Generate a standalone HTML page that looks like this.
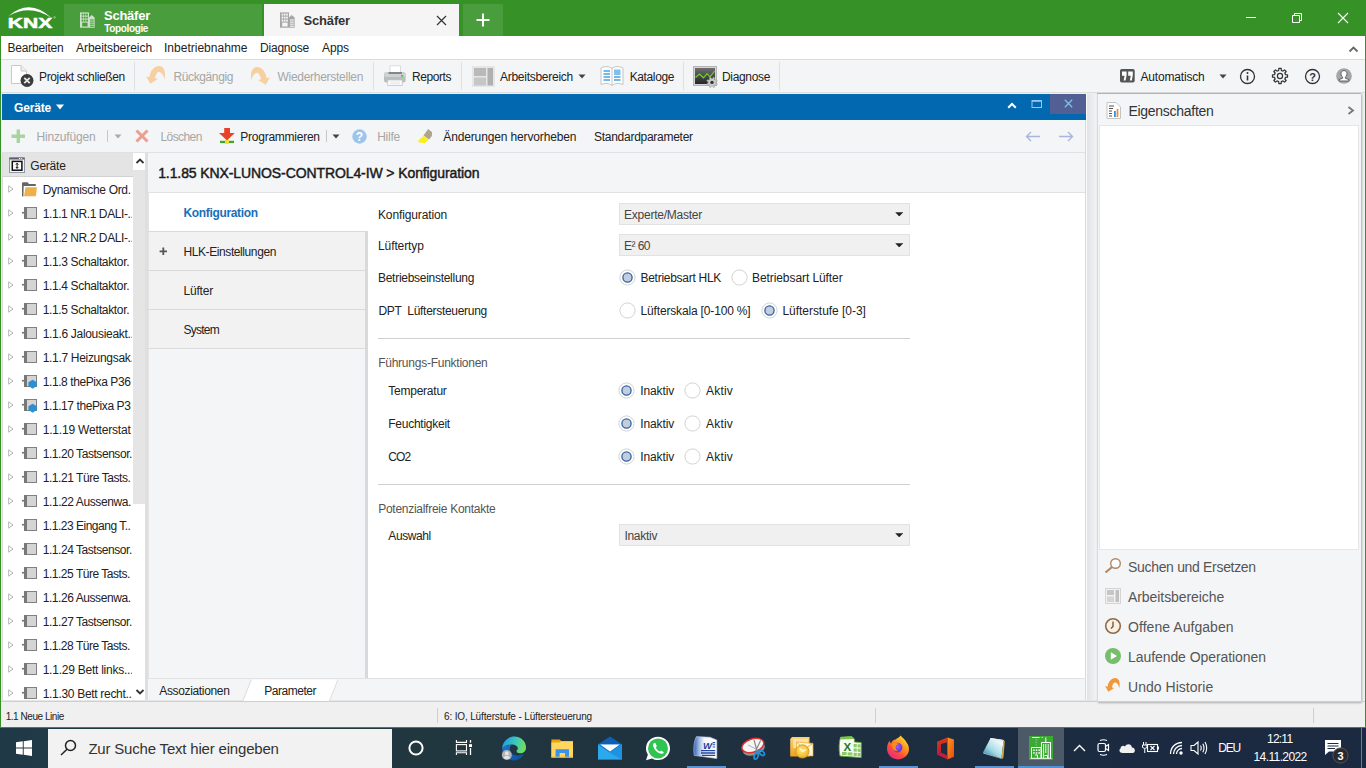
<!DOCTYPE html>
<html lang="de">
<head>
<meta charset="utf-8">
<title>ETS5 - Schäfer</title>
<style>
html,body{margin:0;padding:0}
body{width:1366px;height:768px;overflow:hidden;position:relative;background:#f0f0f0;font-family:"Liberation Sans", sans-serif;}
#app div,#app svg,#app span{position:absolute}
#app span{white-space:pre;line-height:1;display:block}
#app{position:absolute;left:0;top:0;width:1366px;height:768px;overflow:hidden}
</style>
</head>
<body>
<div id="app">
<div style="left:0px;top:0px;width:1366px;height:728px;background:#369127;"></div>
<div style="left:1px;top:36px;width:1364px;height:23px;background:#fff;"></div>
<div style="left:1px;top:59px;width:1364px;height:1px;background:#dcdcdc;"></div>
<div style="left:1px;top:60px;width:1364px;height:33px;background:#f4f5f7;"></div>
<div style="left:1px;top:92px;width:1364px;height:1px;background:#dcdcdc;"></div>
<div style="left:1px;top:93px;width:1364px;height:609px;background:#eef0f3;"></div>
<div style="left:1px;top:702px;width:1364px;height:25px;background:#f0f0f0;"></div>
<div style="left:1px;top:701px;width:1364px;height:1px;background:#d4d4d4;"></div>
<div style="left:64px;top:4px;width:198px;height:32px;background:#4a9d3d;"></div>
<div style="left:264px;top:4px;width:195px;height:32px;background:#f5f5f5;"></div>
<div style="left:463px;top:4px;width:40px;height:32px;background:#4a9d3d;"></div>
<div style="left:134px;top:62px;width:1px;height:28px;background:#dedfe2;"></div>
<div style="left:373px;top:62px;width:1px;height:28px;background:#dedfe2;"></div>
<div style="left:461px;top:62px;width:1px;height:28px;background:#dedfe2;"></div>
<div style="left:683px;top:62px;width:1px;height:28px;background:#dedfe2;"></div>
<div style="left:779px;top:62px;width:1px;height:28px;background:#dedfe2;"></div>
<div style="left:2px;top:94px;width:1084px;height:26px;background:#0269b1;"></div>
<div style="left:1050px;top:94px;width:36px;height:20px;background:#525f95;"></div>
<div style="left:2px;top:120px;width:1084px;height:32px;background:#f4f5f7;"></div>
<div style="left:2px;top:152px;width:1084px;height:1px;background:#dfe1e5;"></div>
<div style="left:107px;top:130px;width:1px;height:12px;background:#c8c8c8;"></div>
<div style="left:326px;top:130px;width:1px;height:12px;background:#c8c8c8;"></div>
<div style="left:2px;top:153px;width:131px;height:547px;background:#fff;"></div>
<div style="left:2px;top:153px;width:131px;height:24px;background:#e4e4e4;"></div>
<div style="left:2px;top:176px;width:131px;height:1px;background:#d2d2d2;"></div>
<div style="left:132.5px;top:153px;width:12.5px;height:547px;background:#fff;"></div>
<div style="left:132.5px;top:170px;width:12.5px;height:334px;background:#e5e5e5;"></div>
<div style="left:145px;top:153px;width:3px;height:547px;background:#dfdfdf;"></div>
<div style="left:2px;top:153px;width:1px;height:548px;background:#dadada;"></div>
<div style="left:2px;top:700px;width:146px;height:1px;background:#d2d2d2;"></div>
<div style="left:148px;top:153px;width:938px;height:525px;background:#fff;"></div>
<div style="left:148px;top:153px;width:938px;height:39px;background:#f4f5f7;"></div>
<div style="left:148px;top:192px;width:938px;height:1px;background:#dfe1e5;"></div>
<div style="left:148px;top:231px;width:218px;height:447px;background:#f4f5f7;"></div>
<div style="left:148px;top:231px;width:218px;height:117px;background:#f2f2f2;"></div>
<div style="left:148px;top:193px;width:1px;height:485px;background:#e4e4e4;"></div>
<div style="left:148px;top:231px;width:218px;height:1px;background:#dadada;"></div>
<div style="left:148px;top:270px;width:218px;height:1px;background:#dadada;"></div>
<div style="left:148px;top:309px;width:218px;height:1px;background:#dadada;"></div>
<div style="left:148px;top:348px;width:218px;height:1px;background:#dadada;"></div>
<div style="left:365px;top:231px;width:3px;height:447px;background:#d7d9dc;"></div>
<div style="left:148px;top:678px;width:938px;height:24px;background:#f4f5f7;"></div>
<div style="left:1085px;top:120px;width:1px;height:582px;background:#d9d9d9;"></div>
<div style="left:1086px;top:94px;width:1px;height:608px;background:#fafafa;"></div>
<div style="left:148px;top:678px;width:938px;height:1px;background:#e2e2e2;"></div>
<div style="left:619px;top:203px;width:291px;height:22px;background:#f0f0f0;box-sizing:border-box;border:1px solid #e2e2e2;"></div>
<div style="left:619px;top:234px;width:291px;height:22px;background:#f0f0f0;box-sizing:border-box;border:1px solid #e2e2e2;"></div>
<div style="left:619px;top:524px;width:291px;height:22px;background:#f0f0f0;box-sizing:border-box;border:1px solid #e2e2e2;"></div>
<div style="left:378px;top:338px;width:532px;height:1px;background:#d0d0d0;"></div>
<div style="left:378px;top:484px;width:532px;height:1px;background:#d0d0d0;"></div>
<div style="left:1087px;top:94px;width:10px;height:608px;background:#eaebee;background:linear-gradient(90deg,#e2e3e6,#f3f4f6);"></div>
<div style="left:1097px;top:93px;width:264px;height:609px;background:#f4f5f7;box-shadow:1px 1px 2px rgba(0,0,0,.28);"></div>
<div style="left:1097px;top:94px;width:1px;height:607px;background:#d9d9d9;"></div>
<div style="left:1099px;top:125px;width:260px;height:425px;background:#fff;box-sizing:border-box;border:1px solid #e6e6e6;"></div>
<div style="left:1097px;top:93px;width:264px;height:1px;background:#b4b4b4;"></div>
<div style="left:1px;top:701px;width:1364px;height:1px;background:#cfcfcf;"></div>
<div style="left:1px;top:700px;width:1096px;height:1px;background:#e6e6e6;"></div>
<div style="left:437px;top:708px;width:1px;height:15px;background:#cfcfcf;"></div>
<div style="left:875px;top:708px;width:1px;height:15px;background:#cfcfcf;"></div>
<div style="left:1313px;top:708px;width:1px;height:15px;background:#cfcfcf;"></div>
<div style="left:0px;top:728px;width:1366px;height:40px;background:#1e2f41;background:linear-gradient(90deg,#1f3a47 0,#21373f 32%,#1e2f40 60%,#1b2a41 85%,#1b2941 100%);"></div>
<div style="left:48px;top:729px;width:344px;height:39px;background:#f2f2f2;"></div>
<div style="left:1361px;top:728px;width:1px;height:40px;background:#6f7a88;"></div>
<div style="left:1018px;top:728px;width:46px;height:40px;background:#4c5967;"></div>
<div style="left:687px;top:766px;width:39px;height:2px;background:#5d93d0;"></div>
<div style="left:879px;top:766px;width:39px;height:2px;background:#5d93d0;"></div>
<div style="left:975px;top:766px;width:39px;height:2px;background:#5d93d0;"></div>
<div style="left:1018px;top:766px;width:46px;height:2px;background:#4f92d6;"></div>
<svg style="left:7px;top:6px;" width="50" height="24" viewBox="0 0 50 24"><path d="M1.6 10 Q23 -8.6 44.8 12.2 Q23 -2.6 1.6 10 Z" fill="#fff"/>
<text x="0.8" y="21.9" font-family="Liberation Sans, sans-serif" font-weight="bold" font-size="14.4" fill="#fff" stroke="#fff" stroke-width=".5" textLength="44.4" lengthAdjust="spacingAndGlyphs">KNX</text><circle cx="47.6" cy="11.4" r=".8" fill="none" stroke="#fff" stroke-width=".4"/></svg>
<svg style="left:80px;top:12px;" width="16" height="17" viewBox="0 0 16 17"><g opacity="0.72"><rect x="0" y="0.4" width="9" height="15.3" fill="#fff"/><path d="M9 5.6 L11.7 3 L14.6 5.6 V15.7 H9 Z" fill="#fff"/>
<g fill="#4a9d3d"><rect x="1.6" y="1.6" width="1.7" height="2" /><rect x="3.9" y="1.6" width="1.7" height="2" /><rect x="6.2" y="1.6" width="1.7" height="2" /><rect x="1.6" y="4.6" width="1.7" height="2" /><rect x="3.9" y="4.6" width="1.7" height="2" /><rect x="6.2" y="4.6" width="1.7" height="2" /><rect x="1.6" y="7.6" width="1.7" height="2" /><rect x="3.9" y="7.6" width="1.7" height="2" /><rect x="6.2" y="7.6" width="1.7" height="2" /><rect x="2.2" y="10.6" width="5.4" height="3.9"/><rect x="10" y="7.4" width="3.8" height="1.1"/><rect x="10" y="9.5" width="3.8" height="1.1"/><rect x="10" y="11.6" width="3.8" height="1.1"/><rect x="10" y="13.7" width="3.8" height="1.1"/></g></g></svg>
<svg style="left:280px;top:12px;" width="16" height="17" viewBox="0 0 16 17"><g opacity="0.75"><rect x="0" y="0.4" width="9" height="15.3" fill="#8c8c8c"/><path d="M9 5.6 L11.7 3 L14.6 5.6 V15.7 H9 Z" fill="#8c8c8c"/>
<g fill="#f4f5f7"><rect x="1.6" y="1.6" width="1.7" height="2" /><rect x="3.9" y="1.6" width="1.7" height="2" /><rect x="6.2" y="1.6" width="1.7" height="2" /><rect x="1.6" y="4.6" width="1.7" height="2" /><rect x="3.9" y="4.6" width="1.7" height="2" /><rect x="6.2" y="4.6" width="1.7" height="2" /><rect x="1.6" y="7.6" width="1.7" height="2" /><rect x="3.9" y="7.6" width="1.7" height="2" /><rect x="6.2" y="7.6" width="1.7" height="2" /><rect x="2.2" y="10.6" width="5.4" height="3.9"/><rect x="10" y="7.4" width="3.8" height="1.1"/><rect x="10" y="9.5" width="3.8" height="1.1"/><rect x="10" y="11.6" width="3.8" height="1.1"/><rect x="10" y="13.7" width="3.8" height="1.1"/></g></g></svg>
<svg style="left:436px;top:15px;" width="11" height="11" viewBox="0 0 11 11"><path d="M1 1 L10 10 M10 1 L1 10" stroke="#333" stroke-width="1.2" fill="none"/></svg>
<svg style="left:476px;top:13px;" width="14" height="14" viewBox="0 0 14 14"><path d="M7 0.5 V13.5 M0.5 7 H13.5" stroke="#fff" stroke-width="2" fill="none"/></svg>
<svg style="left:1245px;top:12px;" width="12" height="12" viewBox="0 0 12 12"><path d="M1 5.5 H11" stroke="#fff" stroke-width="1"/></svg>
<svg style="left:1291px;top:12px;" width="12" height="12" viewBox="0 0 12 12"><path d="M1.5 3.5 H8.5 V10.5 H1.5 Z M3.5 3.5 V1.5 H10.5 V8.5 H8.5" stroke="#fff" stroke-width="1" fill="none"/></svg>
<svg style="left:1337px;top:12px;" width="12" height="12" viewBox="0 0 12 12"><path d="M1 1 L11 11 M11 1 L1 11" stroke="#fff" stroke-width="1.1" fill="none"/></svg>
<svg style="left:1348px;top:45px;" width="11" height="8" viewBox="0 0 11 8"><path d="M1.5 6.5 L5.5 2.5 L9.5 6.5" stroke="#666" stroke-width="1.8" fill="none"/></svg>
<svg style="left:10px;top:64px;" width="26" height="24" viewBox="0 0 26 24"><path d="M1.5 1.5 H11 L16.5 7 V19.5 H1.5 Z" fill="#fff" stroke="#c8c8c8"/><path d="M11 1.5 V7 H16.5" fill="#eee" stroke="#c8c8c8"/>
<circle cx="17" cy="16.5" r="6.5" fill="#3c3c3c"/><path d="M14.3 13.8 L19.7 19.2 M19.7 13.8 L14.3 19.2" stroke="#e8e8e8" stroke-width="1.8"/></svg>
<svg style="left:146px;top:66px;" width="20" height="18" viewBox="0 0 20 18"><path d="M0.15 10.4 L3.4 11.1 C4 5 8.5 0.1 13 0.1 C17.8 0.1 20.2 5.5 18.4 13.3 C17.8 9.5 16 6.6 13.6 5.9 C11.5 5.4 9.8 7.6 9 12.3 L11.9 13 L4.25 17.8 Z" fill="#f6d0a0"/></svg>
<svg style="left:249.5px;top:66.5px;" width="20" height="18" viewBox="0 0 20 18"><g transform="translate(20,0) scale(-1,1)"><path d="M0.15 10.4 L3.4 11.1 C4 5 8.5 0.1 13 0.1 C17.8 0.1 20.2 5.5 18.4 13.3 C17.8 9.5 16 6.6 13.6 5.9 C11.5 5.4 9.8 7.6 9 12.3 L11.9 13 L4.25 17.8 Z" fill="#f6d0a0"/></g></svg>
<svg style="left:383px;top:65px;" width="24" height="22" viewBox="0 0 24 22"><rect x="7" y="0.8" width="10.5" height="8" fill="#fff" stroke="#d4d4d4" stroke-width=".8"/><rect x="1" y="7" width="21.6" height="10.5" rx="2.5" fill="#b9bdbf"/><rect x="1" y="7" width="21.6" height="5" rx="2.5" fill="#cfd2d3"/><rect x="5.5" y="7.4" width="13.5" height="1.2" fill="#555"/>
<rect x="4.8" y="15" width="14.4" height="5.6" fill="#fff" stroke="#c4c4c4" stroke-width=".8"/><path d="M7 17 H17 M7 18.8 H17" stroke="#ddd" stroke-width=".8"/><rect x="18" y="10" width="2.2" height="1.8" fill="#4c4"/></svg>
<svg style="left:472px;top:66px;" width="23" height="21" viewBox="0 0 23 21"><rect x="0" y="0" width="23" height="21" fill="#e6e6e6"/><rect x="2" y="2" width="12" height="8" fill="#b9b9b9"/><rect x="2" y="11.5" width="12" height="8" fill="#c6c6c6"/><rect x="15.5" y="2" width="5.5" height="17.5" fill="#b0b0b0"/></svg>
<svg style="left:578px;top:74px;" width="8" height="5" viewBox="0 0 8 5"><path d="M0.5 0.5 H7.5 L4 4.5 Z" fill="#444"/></svg>
<svg style="left:600px;top:65px;" width="24" height="22" viewBox="0 0 24 22"><path d="M1 3 C5 1 9 1 12 3.5 C15 1 19 1 23 3 V19.5 C19 18 15 18 12 20.5 C9 18 5 18 1 19.5 Z" fill="#fdfdfd" stroke="#c4c4c4"/>
<path d="M12 3.5 V20.5" stroke="#c8c8c8"/><g stroke="#4aa3df" stroke-width="1.3"><path d="M3.5 6 H10 M3.5 9 H10 M3.5 12 H10 M3.5 15 H10 M14 12 H20.5 M14 15 H20.5"/></g><rect x="14" y="4.5" width="6.5" height="5.5" fill="#7fc0ec"/></svg>
<svg style="left:693px;top:66px;" width="25" height="23" viewBox="0 0 25 23"><defs><linearGradient id="gd" x1="0" y1="0" x2="0" y2="1"><stop offset="0" stop-color="#6e6e6e"/><stop offset="1" stop-color="#262626"/></linearGradient></defs>
<rect x="0.5" y="0.5" width="23" height="19" fill="#d4d4d4" stroke="#b4b4b4"/><rect x="2" y="2" width="20" height="16" fill="url(#gd)"/>
<path d="M2.5 11.5 L6.5 8 L10.5 11.8 L14 7.6 L17 10.8 L21.6 5" stroke="#6cd42a" stroke-width="1.2" fill="none"/><path d="M22.85 17.01 L24.22 17.78 L23.67 19.11 L22.16 18.69 L21.29 19.56 L21.71 21.07 L20.38 21.62 L19.61 20.25 L18.39 20.25 L17.62 21.62 L16.29 21.07 L16.71 19.56 L15.84 18.69 L14.33 19.11 L13.78 17.78 L15.15 17.01 L15.15 15.79 L13.78 15.02 L14.33 13.69 L15.84 14.11 L16.71 13.24 L16.29 11.73 L17.62 11.18 L18.39 12.55 L19.61 12.55 L20.38 11.18 L21.71 11.73 L21.29 13.24 L22.16 14.11 L23.67 13.69 L24.22 15.02 L22.85 15.79 Z" fill="#c9c9c9" stroke="#9a9a9a" stroke-width=".5"/><circle cx="19" cy="16.4" r="1.7" fill="#333"/></svg>
<svg style="left:1119.7px;top:69px;" width="15" height="14" viewBox="0 0 15 14"><rect x="0" y="0" width="14.7" height="13.6" rx="1.8" fill="#555"/><path d="M2 2.6 H6.6 V6 L5.6 11.6 H3.6 L4.6 6.8 H2 Z M8.2 2.6 H12.8 V6 L11.8 11.6 H9.8 L10.8 6.8 H8.2 Z" fill="#fff"/></svg>
<svg style="left:1219px;top:74px;" width="8" height="5" viewBox="0 0 8 5"><path d="M0.5 0.5 H7.5 L4 4.5 Z" fill="#444"/></svg>
<svg style="left:1239.2px;top:67.5px;" width="17" height="17" viewBox="0 0 17 17"><circle cx="8.5" cy="8.5" r="7" fill="none" stroke="#333" stroke-width="1.3"/><path d="M8.5 7.5 V12.5" stroke="#333" stroke-width="1.6"/><circle cx="8.5" cy="5" r="1" fill="#333"/></svg>
<svg style="left:1270.6px;top:67px;" width="18" height="18" viewBox="0 0 18 18"><path d="M14.54 7.67 L16.51 7.81 L16.51 10.19 L14.54 10.33 L13.86 11.98 L15.15 13.47 L13.47 15.15 L11.98 13.86 L10.33 14.54 L10.19 16.51 L7.81 16.51 L7.67 14.54 L6.02 13.86 L4.53 15.15 L2.85 13.47 L4.14 11.98 L3.46 10.33 L1.49 10.19 L1.49 7.81 L3.46 7.67 L4.14 6.02 L2.85 4.53 L4.53 2.85 L6.02 4.14 L7.67 3.46 L7.81 1.49 L10.19 1.49 L10.33 3.46 L11.98 4.14 L13.47 2.85 L15.15 4.53 L13.86 6.02 Z" fill="none" stroke="#333" stroke-width="1.25" stroke-linejoin="round"/><circle cx="9" cy="9" r="2.6" fill="none" stroke="#333" stroke-width="1.2"/></svg>
<svg style="left:1303.5px;top:67.5px;" width="17" height="17" viewBox="0 0 17 17"><circle cx="8.5" cy="8.5" r="7" fill="none" stroke="#333" stroke-width="1.3"/><text x="8.5" y="12.6" text-anchor="middle" font-family="Liberation Sans, sans-serif" font-weight="bold" font-size="11" fill="#333">?</text></svg>
<svg style="left:1335px;top:67px;" width="18" height="18" viewBox="0 0 18 18"><circle cx="9" cy="9" r="7.8" fill="#a6a6a6"/><path d="M9 3.6 C11 3.6 12 5 12 6.8 C12 8.4 11.2 9.6 10.4 10.2 V11.2 L14 12.6 V14 H4 V12.6 L7.6 11.2 V10.2 C6.8 9.6 6 8.4 6 6.8 C6 5 7 3.6 9 3.6 Z" fill="#fff" stroke="#555" stroke-width=".9"/></svg>
<svg style="left:56px;top:104px;" width="8" height="6" viewBox="0 0 8 6"><path d="M0 0.5 H8 L4 5.5 Z" fill="#fff"/></svg>
<svg style="left:1007px;top:101.5px;" width="10" height="7" viewBox="0 0 10 7"><path d="M1.2 5.8 L5 2 L8.8 5.8" stroke="#fff" stroke-width="2" fill="none"/></svg>
<svg style="left:1031px;top:99px;" width="12" height="10" viewBox="0 0 12 10"><rect x="1" y="1.5" width="9.5" height="7" fill="none" stroke="#9cc4ec" stroke-width="1"/><path d="M1 2 H10.5" stroke="#9cc4ec" stroke-width="1.6"/></svg>
<svg style="left:1063.5px;top:99.3px;" width="9" height="9" viewBox="0 0 9 9"><path d="M0.8 0.8 L8.2 8.2 M8.2 0.8 L0.8 8.2" stroke="#7cc0e8" stroke-width="1.3" fill="none"/></svg>
<svg style="left:11px;top:129px;" width="15" height="15" viewBox="0 0 15 15"><path d="M7.3 0.5 V14 M0.5 7.3 H14" stroke="#a8d49e" stroke-width="3.4"/></svg>
<svg style="left:114px;top:134px;" width="8" height="5" viewBox="0 0 8 5"><path d="M0.5 0.5 H7.5 L4 4.5 Z" fill="#aaa"/></svg>
<svg style="left:135px;top:129px;" width="14" height="14" viewBox="0 0 14 14"><path d="M1.5 1.5 L12.5 12.5 M12.5 1.5 L1.5 12.5" stroke="#eaa090" stroke-width="3"/></svg>
<svg style="left:219px;top:128px;" width="17" height="16" viewBox="0 0 17 16"><path d="M5.2 0 H11 V5.1 H15.7 L8 12.6 L0 5.1 H5.2 Z" fill="#e8432a"/><rect x="1" y="12.8" width="14" height="2.3" fill="#3ea42c"/><rect x="6" y="12" width="4" height="3.9" fill="#f2dc30"/></svg>
<svg style="left:332px;top:134px;" width="8" height="5" viewBox="0 0 8 5"><path d="M0.5 0.5 H7.5 L4 4.5 Z" fill="#444"/></svg>
<svg style="left:351.5px;top:128.5px;" width="15" height="15" viewBox="0 0 15 15"><circle cx="7.5" cy="7.5" r="7.2" fill="#9dc5ea"/><text x="7.5" y="12" text-anchor="middle" font-family="Liberation Sans, sans-serif" font-weight="bold" font-size="12" fill="#fff">?</text></svg>
<svg style="left:417px;top:128px;" width="16" height="16" viewBox="0 0 16 16"><path d="M11.2 1 L15.1 4.2 L14.9 7.9 L12 11.6 L6.5 7.5 Z" fill="#aea58f"/><path d="M6.5 7.7 L11.8 11.6 L7.9 14.9 L1.7 14.5 L1.2 12.7 Z" fill="#fbee1e"/></svg>
<svg style="left:1025px;top:130.5px;" width="16" height="11" viewBox="0 0 16 11"><path d="M15 5.5 H1.5 M6 1 L1.5 5.5 L6 10" stroke="#a8b6da" stroke-width="1.4" fill="none"/></svg>
<svg style="left:1058px;top:130.5px;" width="16" height="11" viewBox="0 0 16 11"><path d="M1 5.5 H14.5 M10 1 L14.5 5.5 L10 10" stroke="#a8b6da" stroke-width="1.4" fill="none"/></svg>
<svg style="left:135px;top:157px;" width="10" height="8" viewBox="0 0 10 8"><path d="M1.5 6 L5 2.5 L8.5 6" stroke="#333" stroke-width="1.8" fill="none"/></svg>
<svg style="left:135px;top:688px;" width="10" height="8" viewBox="0 0 10 8"><path d="M1.5 2 L5 5.5 L8.5 2" stroke="#333" stroke-width="1.8" fill="none"/></svg>
<svg style="left:9px;top:157px;" width="16" height="16" viewBox="0 0 16 16"><rect x="0.5" y="1" width="15" height="14.5" fill="#f4f4f4" stroke="#8f98a8"/><rect x="0.5" y="0.5" width="15" height="2" fill="#5a6070"/><rect x="10" y="1" width="1.2" height="1" fill="#fff"/><rect x="12" y="1" width="1.2" height="1" fill="#ddd"/><rect x="13.8" y="1" width="1.2" height="1" fill="#e33"/><rect x="3.3" y="4.4" width="9.6" height="8.8" fill="#fff" stroke="#111" stroke-width="1.5"/><path d="M8.1 6.3 V11.3 M6.9 7.6 L8.1 6.2 L9.3 7.6 M6.9 10 L8.1 11.4 L9.3 10" stroke="#111" stroke-width="1" fill="none"/></svg>
<svg style="left:8px;top:185.3px;" width="6" height="8" viewBox="0 0 6 8"><path d="M0.7 0.8 L5 4 L0.7 7.2 Z" fill="none" stroke="#b4b4b4" stroke-width="1"/></svg>
<svg style="left:22px;top:181.8px;" width="16" height="15" viewBox="0 0 16 15"><path d="M0 14.4 V1.2 Q0 0.2 1 0.2 H5.6 L7 2.1 H13.8 V4.1 H1.7 L1.4 14.4 Z" fill="#666"/><path d="M3.5 5.2 H15 L13.8 14.2 H2 Z" fill="#eeb04c"/></svg>
<svg style="left:8px;top:209.3px;" width="6" height="8" viewBox="0 0 6 8"><path d="M0.7 0.8 L5 4 L0.7 7.2 Z" fill="none" stroke="#b4b4b4" stroke-width="1"/></svg>
<svg style="left:22px;top:207.0px;" width="17" height="14" viewBox="0 0 17 14"><rect x="2.5" y="0.5" width="12" height="11" fill="#d4d4d4" stroke="#808080"/><rect x="2" y="0" width="3" height="12" fill="#777"/><rect x="0" y="4.9" width="2.2" height="1.7" fill="#777"/></svg>
<svg style="left:8px;top:233.3px;" width="6" height="8" viewBox="0 0 6 8"><path d="M0.7 0.8 L5 4 L0.7 7.2 Z" fill="none" stroke="#b4b4b4" stroke-width="1"/></svg>
<svg style="left:22px;top:231.0px;" width="17" height="14" viewBox="0 0 17 14"><rect x="2.5" y="0.5" width="12" height="11" fill="#d4d4d4" stroke="#808080"/><rect x="2" y="0" width="3" height="12" fill="#777"/><rect x="0" y="4.9" width="2.2" height="1.7" fill="#777"/></svg>
<svg style="left:8px;top:257.3px;" width="6" height="8" viewBox="0 0 6 8"><path d="M0.7 0.8 L5 4 L0.7 7.2 Z" fill="none" stroke="#b4b4b4" stroke-width="1"/></svg>
<svg style="left:22px;top:255.0px;" width="17" height="14" viewBox="0 0 17 14"><rect x="2.5" y="0.5" width="12" height="11" fill="#d4d4d4" stroke="#808080"/><rect x="2" y="0" width="3" height="12" fill="#777"/><rect x="0" y="4.9" width="2.2" height="1.7" fill="#777"/></svg>
<svg style="left:8px;top:281.3px;" width="6" height="8" viewBox="0 0 6 8"><path d="M0.7 0.8 L5 4 L0.7 7.2 Z" fill="none" stroke="#b4b4b4" stroke-width="1"/></svg>
<svg style="left:22px;top:279.0px;" width="17" height="14" viewBox="0 0 17 14"><rect x="2.5" y="0.5" width="12" height="11" fill="#d4d4d4" stroke="#808080"/><rect x="2" y="0" width="3" height="12" fill="#777"/><rect x="0" y="4.9" width="2.2" height="1.7" fill="#777"/></svg>
<svg style="left:8px;top:305.3px;" width="6" height="8" viewBox="0 0 6 8"><path d="M0.7 0.8 L5 4 L0.7 7.2 Z" fill="none" stroke="#b4b4b4" stroke-width="1"/></svg>
<svg style="left:22px;top:303.0px;" width="17" height="14" viewBox="0 0 17 14"><rect x="2.5" y="0.5" width="12" height="11" fill="#d4d4d4" stroke="#808080"/><rect x="2" y="0" width="3" height="12" fill="#777"/><rect x="0" y="4.9" width="2.2" height="1.7" fill="#777"/></svg>
<svg style="left:8px;top:329.3px;" width="6" height="8" viewBox="0 0 6 8"><path d="M0.7 0.8 L5 4 L0.7 7.2 Z" fill="none" stroke="#b4b4b4" stroke-width="1"/></svg>
<svg style="left:22px;top:327.0px;" width="17" height="14" viewBox="0 0 17 14"><rect x="2.5" y="0.5" width="12" height="11" fill="#d4d4d4" stroke="#808080"/><rect x="2" y="0" width="3" height="12" fill="#777"/><rect x="0" y="4.9" width="2.2" height="1.7" fill="#777"/></svg>
<svg style="left:8px;top:353.3px;" width="6" height="8" viewBox="0 0 6 8"><path d="M0.7 0.8 L5 4 L0.7 7.2 Z" fill="none" stroke="#b4b4b4" stroke-width="1"/></svg>
<svg style="left:22px;top:351.0px;" width="17" height="14" viewBox="0 0 17 14"><rect x="2.5" y="0.5" width="12" height="11" fill="#d4d4d4" stroke="#808080"/><rect x="2" y="0" width="3" height="12" fill="#777"/><rect x="0" y="4.9" width="2.2" height="1.7" fill="#777"/></svg>
<svg style="left:8px;top:377.3px;" width="6" height="8" viewBox="0 0 6 8"><path d="M0.7 0.8 L5 4 L0.7 7.2 Z" fill="none" stroke="#b4b4b4" stroke-width="1"/></svg>
<svg style="left:22px;top:375.0px;" width="17" height="14" viewBox="0 0 17 14"><rect x="2.5" y="0.5" width="12" height="11" fill="#d4d4d4" stroke="#808080"/><rect x="2" y="0" width="3" height="12" fill="#777"/><rect x="0" y="4.9" width="2.2" height="1.7" fill="#777"/><path d="M10.6 4.7 L14.9 7.2 V10.8 L10.6 13.7 L6.4 10.8 V7.2 Z" fill="#2e8fd0"/></svg>
<svg style="left:8px;top:401.3px;" width="6" height="8" viewBox="0 0 6 8"><path d="M0.7 0.8 L5 4 L0.7 7.2 Z" fill="none" stroke="#b4b4b4" stroke-width="1"/></svg>
<svg style="left:22px;top:399.0px;" width="17" height="14" viewBox="0 0 17 14"><rect x="2.5" y="0.5" width="12" height="11" fill="#d4d4d4" stroke="#808080"/><rect x="2" y="0" width="3" height="12" fill="#777"/><rect x="0" y="4.9" width="2.2" height="1.7" fill="#777"/><path d="M10.6 4.7 L14.9 7.2 V10.8 L10.6 13.7 L6.4 10.8 V7.2 Z" fill="#2e8fd0"/></svg>
<svg style="left:8px;top:425.3px;" width="6" height="8" viewBox="0 0 6 8"><path d="M0.7 0.8 L5 4 L0.7 7.2 Z" fill="none" stroke="#b4b4b4" stroke-width="1"/></svg>
<svg style="left:22px;top:423.0px;" width="17" height="14" viewBox="0 0 17 14"><rect x="2.5" y="0.5" width="12" height="11" fill="#d4d4d4" stroke="#808080"/><rect x="2" y="0" width="3" height="12" fill="#777"/><rect x="0" y="4.9" width="2.2" height="1.7" fill="#777"/></svg>
<svg style="left:8px;top:449.3px;" width="6" height="8" viewBox="0 0 6 8"><path d="M0.7 0.8 L5 4 L0.7 7.2 Z" fill="none" stroke="#b4b4b4" stroke-width="1"/></svg>
<svg style="left:22px;top:447.0px;" width="17" height="14" viewBox="0 0 17 14"><rect x="2.5" y="0.5" width="12" height="11" fill="#d4d4d4" stroke="#808080"/><rect x="2" y="0" width="3" height="12" fill="#777"/><rect x="0" y="4.9" width="2.2" height="1.7" fill="#777"/></svg>
<svg style="left:8px;top:473.3px;" width="6" height="8" viewBox="0 0 6 8"><path d="M0.7 0.8 L5 4 L0.7 7.2 Z" fill="none" stroke="#b4b4b4" stroke-width="1"/></svg>
<svg style="left:22px;top:471.0px;" width="17" height="14" viewBox="0 0 17 14"><rect x="2.5" y="0.5" width="12" height="11" fill="#d4d4d4" stroke="#808080"/><rect x="2" y="0" width="3" height="12" fill="#777"/><rect x="0" y="4.9" width="2.2" height="1.7" fill="#777"/></svg>
<svg style="left:8px;top:497.3px;" width="6" height="8" viewBox="0 0 6 8"><path d="M0.7 0.8 L5 4 L0.7 7.2 Z" fill="none" stroke="#b4b4b4" stroke-width="1"/></svg>
<svg style="left:22px;top:495.0px;" width="17" height="14" viewBox="0 0 17 14"><rect x="2.5" y="0.5" width="12" height="11" fill="#d4d4d4" stroke="#808080"/><rect x="2" y="0" width="3" height="12" fill="#777"/><rect x="0" y="4.9" width="2.2" height="1.7" fill="#777"/></svg>
<svg style="left:8px;top:521.3px;" width="6" height="8" viewBox="0 0 6 8"><path d="M0.7 0.8 L5 4 L0.7 7.2 Z" fill="none" stroke="#b4b4b4" stroke-width="1"/></svg>
<svg style="left:22px;top:519.0px;" width="17" height="14" viewBox="0 0 17 14"><rect x="2.5" y="0.5" width="12" height="11" fill="#d4d4d4" stroke="#808080"/><rect x="2" y="0" width="3" height="12" fill="#777"/><rect x="0" y="4.9" width="2.2" height="1.7" fill="#777"/></svg>
<svg style="left:8px;top:545.3px;" width="6" height="8" viewBox="0 0 6 8"><path d="M0.7 0.8 L5 4 L0.7 7.2 Z" fill="none" stroke="#b4b4b4" stroke-width="1"/></svg>
<svg style="left:22px;top:543.0px;" width="17" height="14" viewBox="0 0 17 14"><rect x="2.5" y="0.5" width="12" height="11" fill="#d4d4d4" stroke="#808080"/><rect x="2" y="0" width="3" height="12" fill="#777"/><rect x="0" y="4.9" width="2.2" height="1.7" fill="#777"/></svg>
<svg style="left:8px;top:569.3px;" width="6" height="8" viewBox="0 0 6 8"><path d="M0.7 0.8 L5 4 L0.7 7.2 Z" fill="none" stroke="#b4b4b4" stroke-width="1"/></svg>
<svg style="left:22px;top:567.0px;" width="17" height="14" viewBox="0 0 17 14"><rect x="2.5" y="0.5" width="12" height="11" fill="#d4d4d4" stroke="#808080"/><rect x="2" y="0" width="3" height="12" fill="#777"/><rect x="0" y="4.9" width="2.2" height="1.7" fill="#777"/></svg>
<svg style="left:8px;top:593.3px;" width="6" height="8" viewBox="0 0 6 8"><path d="M0.7 0.8 L5 4 L0.7 7.2 Z" fill="none" stroke="#b4b4b4" stroke-width="1"/></svg>
<svg style="left:22px;top:591.0px;" width="17" height="14" viewBox="0 0 17 14"><rect x="2.5" y="0.5" width="12" height="11" fill="#d4d4d4" stroke="#808080"/><rect x="2" y="0" width="3" height="12" fill="#777"/><rect x="0" y="4.9" width="2.2" height="1.7" fill="#777"/></svg>
<svg style="left:8px;top:617.3px;" width="6" height="8" viewBox="0 0 6 8"><path d="M0.7 0.8 L5 4 L0.7 7.2 Z" fill="none" stroke="#b4b4b4" stroke-width="1"/></svg>
<svg style="left:22px;top:615.0px;" width="17" height="14" viewBox="0 0 17 14"><rect x="2.5" y="0.5" width="12" height="11" fill="#d4d4d4" stroke="#808080"/><rect x="2" y="0" width="3" height="12" fill="#777"/><rect x="0" y="4.9" width="2.2" height="1.7" fill="#777"/></svg>
<svg style="left:8px;top:641.3px;" width="6" height="8" viewBox="0 0 6 8"><path d="M0.7 0.8 L5 4 L0.7 7.2 Z" fill="none" stroke="#b4b4b4" stroke-width="1"/></svg>
<svg style="left:22px;top:639.0px;" width="17" height="14" viewBox="0 0 17 14"><rect x="2.5" y="0.5" width="12" height="11" fill="#d4d4d4" stroke="#808080"/><rect x="2" y="0" width="3" height="12" fill="#777"/><rect x="0" y="4.9" width="2.2" height="1.7" fill="#777"/></svg>
<svg style="left:8px;top:665.3px;" width="6" height="8" viewBox="0 0 6 8"><path d="M0.7 0.8 L5 4 L0.7 7.2 Z" fill="none" stroke="#b4b4b4" stroke-width="1"/></svg>
<svg style="left:22px;top:663.0px;" width="17" height="14" viewBox="0 0 17 14"><rect x="2.5" y="0.5" width="12" height="11" fill="#d4d4d4" stroke="#808080"/><rect x="2" y="0" width="3" height="12" fill="#777"/><rect x="0" y="4.9" width="2.2" height="1.7" fill="#777"/></svg>
<svg style="left:8px;top:689.3px;" width="6" height="8" viewBox="0 0 6 8"><path d="M0.7 0.8 L5 4 L0.7 7.2 Z" fill="none" stroke="#b4b4b4" stroke-width="1"/></svg>
<svg style="left:22px;top:687.0px;" width="17" height="14" viewBox="0 0 17 14"><rect x="2.5" y="0.5" width="12" height="11" fill="#d4d4d4" stroke="#808080"/><rect x="2" y="0" width="3" height="12" fill="#777"/><rect x="0" y="4.9" width="2.2" height="1.7" fill="#777"/></svg>
<svg style="left:159px;top:247px;" width="9" height="9" viewBox="0 0 9 9"><path d="M4.3 0.6 V8 M0.6 4.3 H8" stroke="#555" stroke-width="1.8"/></svg>
<svg style="left:894.8px;top:211.8px;" width="8.4" height="4.6" viewBox="0 0 8.4 4.6"><path d="M0.2 0.2 H8.2 L4.2 4.4 Z" fill="#222"/></svg>
<svg style="left:894.8px;top:242.8px;" width="8.4" height="4.6" viewBox="0 0 8.4 4.6"><path d="M0.2 0.2 H8.2 L4.2 4.4 Z" fill="#222"/></svg>
<svg style="left:894.8px;top:532.8px;" width="8.4" height="4.6" viewBox="0 0 8.4 4.6"><path d="M0.2 0.2 H8.2 L4.2 4.4 Z" fill="#222"/></svg>
<svg style="left:618.5px;top:268.5px;" width="17" height="17" viewBox="0 0 17 17"><circle cx="8.5" cy="8.5" r="7.6" fill="#fff" stroke="#d2d2d2" stroke-width="1"/><circle cx="8.5" cy="8.5" r="4.6" fill="#c3cddd" stroke="#2f63a0" stroke-width="1.3"/></svg>
<svg style="left:730.5px;top:268.5px;" width="17" height="17" viewBox="0 0 17 17"><circle cx="8.5" cy="8.5" r="7.6" fill="#fff" stroke="#d2d2d2" stroke-width="1"/></svg>
<svg style="left:618.5px;top:302.0px;" width="17" height="17" viewBox="0 0 17 17"><circle cx="8.5" cy="8.5" r="7.6" fill="#fff" stroke="#d2d2d2" stroke-width="1"/></svg>
<svg style="left:760.5px;top:302.0px;" width="17" height="17" viewBox="0 0 17 17"><circle cx="8.5" cy="8.5" r="7.6" fill="#fff" stroke="#d2d2d2" stroke-width="1"/><circle cx="8.5" cy="8.5" r="4.6" fill="#c3cddd" stroke="#2f63a0" stroke-width="1.3"/></svg>
<svg style="left:618.1px;top:382.2px;" width="17" height="17" viewBox="0 0 17 17"><circle cx="8.5" cy="8.5" r="7.6" fill="#fff" stroke="#d2d2d2" stroke-width="1"/><circle cx="8.5" cy="8.5" r="4.6" fill="#c3cddd" stroke="#2f63a0" stroke-width="1.3"/></svg>
<svg style="left:684.3px;top:382.2px;" width="17" height="17" viewBox="0 0 17 17"><circle cx="8.5" cy="8.5" r="7.6" fill="#fff" stroke="#d2d2d2" stroke-width="1"/></svg>
<svg style="left:618.1px;top:415.3px;" width="17" height="17" viewBox="0 0 17 17"><circle cx="8.5" cy="8.5" r="7.6" fill="#fff" stroke="#d2d2d2" stroke-width="1"/><circle cx="8.5" cy="8.5" r="4.6" fill="#c3cddd" stroke="#2f63a0" stroke-width="1.3"/></svg>
<svg style="left:684.3px;top:415.3px;" width="17" height="17" viewBox="0 0 17 17"><circle cx="8.5" cy="8.5" r="7.6" fill="#fff" stroke="#d2d2d2" stroke-width="1"/></svg>
<svg style="left:618.1px;top:448.1px;" width="17" height="17" viewBox="0 0 17 17"><circle cx="8.5" cy="8.5" r="7.6" fill="#fff" stroke="#d2d2d2" stroke-width="1"/><circle cx="8.5" cy="8.5" r="4.6" fill="#c3cddd" stroke="#2f63a0" stroke-width="1.3"/></svg>
<svg style="left:684.3px;top:448.1px;" width="17" height="17" viewBox="0 0 17 17"><circle cx="8.5" cy="8.5" r="7.6" fill="#fff" stroke="#d2d2d2" stroke-width="1"/></svg>
<svg style="left:240px;top:678.5px;" width="104" height="22" viewBox="0 0 104 22"><path d="M2.8 22 L11.3 0.5 H98 L89.4 22 Z" fill="#fff"/><path d="M2.8 22 L11.3 0.5 M98 0.5 L89.4 22" stroke="#dcdcdc" fill="none"/></svg>
<svg style="left:1106px;top:102px;" width="16" height="17" viewBox="0 0 16 17"><path d="M1 0.5 H10 L14.5 5 V16.5 H1 Z" fill="#fff" stroke="#c4c4c4"/><path d="M3 4 H8 M3 6.5 H7 M3 9 H6 M3 11.5 H6 M3 14 H6" stroke="#555" stroke-width="1.2"/><rect x="8" y="9" width="1.8" height="6" fill="#3b8fd6"/><rect x="10.6" y="7" width="1.8" height="8" fill="#e8903a"/></svg>
<svg style="left:1347px;top:106px;" width="8" height="9" viewBox="0 0 8 9"><path d="M1.5 1 L6 4.5 L1.5 8" stroke="#777" stroke-width="1.8" fill="none"/></svg>
<svg style="left:1104px;top:557px;" width="18" height="18" viewBox="0 0 18 18"><circle cx="11.5" cy="6.5" r="4.8" fill="#fff" stroke="#b08868" stroke-width="1.4"/><path d="M8 10 L1.5 15.5" stroke="#b08868" stroke-width="2.2"/></svg>
<svg style="left:1105px;top:588.2px;" width="16" height="16" viewBox="0 0 16 16"><rect x="0.5" y="0.5" width="15" height="15" fill="#f2f2f2" stroke="#d4d4d4"/><rect x="2" y="2" width="7" height="5" fill="#c6c6c6"/><rect x="2" y="8.5" width="7" height="5.5" fill="#d4d4d4"/><rect x="10.5" y="2" width="3.5" height="12" fill="#c0c0c0"/></svg>
<svg style="left:1104px;top:617px;" width="18" height="18" viewBox="0 0 18 18"><circle cx="9" cy="9" r="7.3" fill="#fdf0dc" stroke="#8c6a50" stroke-width="1.6"/><path d="M9 4.5 V9.5 L7 11.5" stroke="#555" stroke-width="1.3" fill="none"/></svg>
<svg style="left:1104px;top:647px;" width="18" height="18" viewBox="0 0 18 18"><circle cx="9" cy="9" r="8" fill="#76bd6c"/><path d="M6.8 5.2 L13 9 L6.8 12.8 Z" fill="#fff"/></svg>
<svg style="left:1105.2px;top:678px;" width="15.5" height="14" viewBox="0 0 20 18"><path d="M0.15 10.4 L3.4 11.1 C4 5 8.5 0.1 13 0.1 C17.8 0.1 20.2 5.5 18.4 13.3 C17.8 9.5 16 6.6 13.6 5.9 C11.5 5.4 9.8 7.6 9 12.3 L11.9 13 L4.25 17.8 Z" fill="#ef9a3a"/></svg>
<svg style="left:16px;top:739.7px;" width="16" height="16" viewBox="0 0 17 17"><path d="M0 2.4 L7.2 1.4 V8 H0 Z M8.2 1.2 L17 0 V8 H8.2 Z M0 9 H7.2 V15.6 L0 14.6 Z M8.2 9 H17 V17 L8.2 15.8 Z" fill="#fff"/></svg>
<svg style="left:60px;top:739px;" width="17" height="17" viewBox="0 0 17 17"><circle cx="10.5" cy="6.5" r="5" fill="none" stroke="#222" stroke-width="1.5"/><path d="M7 10.2 L1 16" stroke="#222" stroke-width="1.5"/></svg>
<svg style="left:407px;top:739px;" width="18" height="18" viewBox="0 0 18 18"><circle cx="9" cy="9" r="6.6" fill="none" stroke="#fff" stroke-width="2"/></svg>
<svg style="left:455px;top:740px;" width="18" height="16" viewBox="0 0 18 16"><g fill="none" stroke="#fff" stroke-width="1.1"><path d="M1.4 0 V2.4 H11.5 V0 M1.4 15 V12.7 H11.5 V15"/><rect x="1.4" y="4.6" width="10.1" height="6.3"/><path d="M15.5 0 V2.7 M15.5 8 V15" stroke-width="1.3"/></g><rect x="14" y="4.2" width="3" height="2.8" fill="#fff"/></svg>
<svg style="left:501px;top:735.5px;" width="26" height="25" viewBox="0 0 26 25"><defs><linearGradient id="ge" x1="0" y1=".3" x2="1" y2=".5"><stop offset="0" stop-color="#1f9ae0"/><stop offset=".5" stop-color="#38c4c4"/><stop offset="1" stop-color="#74e05a"/></linearGradient><linearGradient id="gb" x1="0" y1="0" x2="1" y2="1"><stop offset="0" stop-color="#1b78d4"/><stop offset="1" stop-color="#0c4c9a"/></linearGradient></defs>
<path d="M1.2 13 C1.2 5.5 7 0.6 13.4 0.6 C20.5 0.6 25 6 25 11.4 C25 15 22.4 17.2 19 17.2 C16.6 17.2 15.4 16 15.6 14.6 C16.6 13.8 17 12.8 16.8 11.8 C16.2 9.6 13.6 8.2 10.8 8.4 C6.4 8.7 3 10.3 1.2 13 Z" fill="url(#ge)"/>
<path d="M1.2 13 C2.4 10.4 6 8.8 10.4 9 C9 10.2 8.6 12 9 14 C9.8 17.8 13 19.8 17 19.4 C19.4 19.2 21.4 18.6 23 17.4 C21 22 17 24.4 12.6 24.4 C6.4 24.4 1.2 19.6 1.2 13 Z" fill="url(#gb)"/>
<circle cx="5.8" cy="19" r="5" fill="#b4b4b4"/><circle cx="5.8" cy="17.4" r="1.9" fill="#e4e4e4"/><path d="M2.6 22 C3.2 19.4 8.4 19.4 9 22 C7.4 23.6 4.2 23.6 2.6 22 Z" fill="#e4e4e4"/></svg>
<svg style="left:551px;top:738.5px;" width="23" height="20" viewBox="0 0 23 20"><path d="M0.4 0.4 H8.6 L10.4 2.2 H22 V18.4 H0.4 Z" fill="#e9a60c"/><path d="M0.4 3.4 H8.4 L10 2.2 H22 V18.4 H0.4 Z" fill="#ffd65e"/><path d="M4.6 18.9 V10.2 H18 V18.9 H14 V14 H8.6 V18.9 Z" fill="#3b92e6"/><rect x="0.4" y="17.6" width="21.6" height=".9" fill="#e8b838"/></svg>
<svg style="left:597px;top:736px;" width="26" height="24" viewBox="0 0 26 24"><path d="M1 8.2 L13 0.5 L25 8.2 Z" fill="#0f5fb4"/><rect x="1" y="8" width="24" height="15.4" fill="#1878cc"/><path d="M3.2 8.4 H22.8 L13 15.6 Z" fill="#fff"/><path d="M1 8.4 L13 16.8 L25 8.4 V23.4 H1 Z" fill="#2ba9ec"/><path d="M25 23.4 L13 16.8 L25 8.4 Z" fill="#1c92e0"/></svg>
<svg style="left:645px;top:736px;" width="26" height="25" viewBox="0 0 26 25"><path d="M13 0.8 C19.8 0.8 25 6 25 12.4 C25 18.8 19.8 24 13 24 C10.8 24 8.8 23.5 7 22.5 L1 24.3 L2.9 18.6 C1.7 16.8 1 14.7 1 12.4 C1 6 6.2 0.8 13 0.8 Z" fill="#fff"/><circle cx="13" cy="12.4" r="10" fill="#2fc351"/><path d="M9.2 7 C8.2 7.6 7.8 9 8.4 10.8 C9.5 14 12 16.6 15.2 17.6 C17 18.1 18.4 17.4 18.8 16.2 L16.2 14.6 L15 15.6 C13.2 14.9 11.4 13 10.8 11.4 L11.8 10.2 L10.6 7.2 Z" fill="#fff"/></svg>
<svg style="left:693px;top:735.5px;" width="25" height="24" viewBox="0 0 25 24"><defs><linearGradient id="gw" x1="0" y1="0" x2="1" y2="0"><stop offset="0" stop-color="#3560b4"/><stop offset=".22" stop-color="#9db6e2"/><stop offset=".45" stop-color="#f2f6fc"/><stop offset="1" stop-color="#fff"/></linearGradient></defs>
<path d="M3.4 0.6 L17 1.2 L23.8 4 V22.6 L1.2 19.4 C0.2 12 1 5 3.4 0.6 Z" fill="url(#gw)" stroke="#b9c8e6" stroke-width=".6"/>
<text x="14.6" y="12.6" text-anchor="middle" font-family="Liberation Sans, sans-serif" font-weight="bold" font-style="italic" font-size="9.5" fill="#1d3f96">W</text>
<path d="M19.6 6.6 H22.2 M19.6 8.8 H22.2 M19.6 11 H22.2" stroke="#2a4ea8" stroke-width="1.1"/><path d="M8 14.6 H22.2 M8 17 H22.2 M9 19.4 H22.2" stroke="#2346a0" stroke-width="1.4"/></svg>
<svg style="left:741px;top:736px;" width="27" height="25" viewBox="0 0 27 25"><g transform="rotate(-18 12.5 11.5)"><ellipse cx="12.5" cy="12.8" rx="11.3" ry="6.4" fill="#8e9296"/><ellipse cx="12.5" cy="9.4" rx="11.3" ry="6.6" fill="#f6f6f6" stroke="#e02f2f" stroke-width="1.4"/></g>
<path d="M13 4 L16.2 15.5 M19.6 4.6 L14.6 15" stroke="#8a8a8a" stroke-width="1.2" fill="none"/><path d="M7 9 L15 13" stroke="#b0b0b0" stroke-width="1"/>
<ellipse cx="15.2" cy="20" rx="1.9" ry="3.3" transform="rotate(18 15.2 20)" fill="none" stroke="#1f93dc" stroke-width="1.7"/><ellipse cx="20.6" cy="16.8" rx="1.9" ry="3.3" transform="rotate(-48 20.6 16.8)" fill="none" stroke="#1f93dc" stroke-width="1.7"/></svg>
<svg style="left:789px;top:735.5px;" width="25" height="23" viewBox="0 0 25 23"><defs><linearGradient id="go" x1="0" y1="0" x2="0" y2="1"><stop offset="0" stop-color="#fbd27a"/><stop offset="1" stop-color="#f0a21c"/></linearGradient><radialGradient id="gc" cx=".45" cy=".4" r=".6"><stop offset="0" stop-color="#ffe98a"/><stop offset="1" stop-color="#f2b21e"/></radialGradient></defs>
<path d="M3 1 H20.5 V20.5 H1.2 V3 Z" fill="url(#go)"/><path d="M4.2 3 H19 V12 H4.2 Z" fill="#fde9b4" opacity=".8"/>
<path d="M7.5 6 L24 7.4 V20 L7.5 19.4 Z" fill="#fff6dc" stroke="#e7a92c" stroke-width=".7"/><path d="M7.5 6 L15 13.4 L24 7.4" fill="none" stroke="#e7a92c" stroke-width=".9"/>
<circle cx="13.4" cy="15.4" r="6.6" fill="url(#gc)" stroke="#d89a14" stroke-width=".9"/><path d="M10.6 12.4 L13.6 15.4 L17 13.6" stroke="#fff8d8" stroke-width="1.3" fill="none"/></svg>
<svg style="left:837.5px;top:735.5px;" width="24" height="23" viewBox="0 0 24 23"><path d="M2.6 1.2 L13.6 0.4 L16.4 3 V6 L23.2 6.6 V21.6 L2 20 C0.6 13 1 6 2.6 1.2 Z" fill="#f6fbf0" stroke="#62ac36" stroke-width=".9"/><path d="M2.6 1.2 L13.6 0.4 L16.4 3 L3.4 3.6 Z" fill="#7cc24e"/>
<g fill="#8ccb6c"><rect x="15.6" y="8" width="3.2" height="3.2"/><rect x="19.6" y="8.3" width="3" height="3.2"/><rect x="15.6" y="12.4" width="3.2" height="3.2"/><rect x="19.6" y="12.7" width="3" height="3.2"/><rect x="4" y="16" width="4.6" height="3"/><rect x="9.6" y="16.4" width="4.8" height="3"/><rect x="15.6" y="16.8" width="3.2" height="3.2"/><rect x="19.6" y="17" width="3" height="3.4"/></g>
<text x="9.4" y="14.6" text-anchor="middle" font-family="Liberation Sans, sans-serif" font-weight="bold" font-size="11.5" fill="#1f7a1f">X</text></svg>
<svg style="left:886px;top:735px;" width="24" height="25" viewBox="0 0 24 25"><defs><linearGradient id="gf" x1=".85" y1=".05" x2=".2" y2=".95"><stop offset="0" stop-color="#ffe03c"/><stop offset=".35" stop-color="#ff9a1c"/><stop offset=".7" stop-color="#ff4a3a"/><stop offset="1" stop-color="#e6268c"/></linearGradient><radialGradient id="gp" cx=".5" cy=".4" r=".6"><stop offset="0" stop-color="#9a5cff"/><stop offset="1" stop-color="#5b32c8"/></radialGradient></defs>
<path d="M14.6 0.6 C16 3 19 4 20.6 7.4 C23 10 23.6 14.4 22.4 17.6 C20.6 22 16.4 24.4 12 24.4 C5.6 24.4 1 19.6 1 13.6 C1 10 2.4 7.4 3.6 5.8 C3.8 7 4.2 7.8 5 8.6 C5.6 6 7.6 4.4 9.6 4.4 C11 3.4 13.6 2.6 14.6 0.6 Z" fill="url(#gf)"/>
<circle cx="11.6" cy="12.6" r="4.8" fill="url(#gp)"/><path d="M5.4 9.6 C7.6 7.6 11 7.6 13.4 9 C11.4 9.2 10.2 10.2 9.8 11.6 C9.2 13.6 10.2 15.4 12 16.2 C8.6 16.6 5.8 14.2 5.4 9.6 Z" fill="#ff8a1e"/></svg>
<svg style="left:936px;top:736.5px;" width="19" height="23" viewBox="0 0 19 23"><defs><linearGradient id="gr" x1="0" y1="0" x2="0" y2="1"><stop offset="0" stop-color="#dc3a1e"/><stop offset=".7" stop-color="#c8242c"/><stop offset="1" stop-color="#b81c54"/></linearGradient><linearGradient id="gy" x1="0" y1="0" x2="1" y2="1"><stop offset="0" stop-color="#ff9a20"/><stop offset="1" stop-color="#e8460e"/></linearGradient></defs>
<path d="M11.4 0.4 L18 2.6 V19.8 L11.4 22.4 Z" fill="url(#gy)"/><path d="M11.4 0.4 L1 4.8 V17.4 L5 15.4 V7 L11.4 5.2 Z" fill="url(#gr)"/><path d="M1 17.4 L11.4 22.4 V18.6 L5 15.4 Z" fill="#c41e3a"/></svg>
<svg style="left:981.5px;top:736.5px;" width="24" height="23" viewBox="0 0 24 23"><defs><linearGradient id="gn" x1=".1" y1=".9" x2=".8" y2=".1"><stop offset="0" stop-color="#2f93ac"/><stop offset=".45" stop-color="#a8dbe6"/><stop offset="1" stop-color="#f6fcfd"/></linearGradient></defs>
<path d="M8.6 1 L21.6 3 L19.4 21.6 L1 15.6 Z" fill="url(#gn)"/><path d="M8.6 1 L21.6 3 L21.3 5 L8 3 Z" fill="#e8eef0"/><path d="M21.6 3 L22.8 4.6 L21.4 20.4 L19.4 21.6 Z" fill="#d9b23c"/><path d="M1 15.6 L19.4 21.6 L21.4 20.4 L20 21.9 L1.4 16.6 Z" fill="#c8d0d2"/></svg>
<svg style="left:1029px;top:736px;" width="24" height="24" viewBox="0 0 24 24"><rect width="24" height="24" fill="#3aaa35"/><g fill="none" stroke="#fff" stroke-width="1"><path d="M2.5 22 V11.5 H12 V22 M12.5 22 V6.5 H21.5 V22 M1.5 22.3 H22.5"/><path d="M14.6 8 V22 M16.8 8 V17 M19.2 8 V22" stroke-width=".9"/><path d="M16.8 6.5 V1.5 M3 1.5 H10.5" /><path d="M6 19 H8.5 V22 M15.5 19.5 H18.5 V22"/></g><g fill="#fff"><rect x="4.2" y="13.4" width="1.5" height="1.5"/><rect x="6.8" y="13.4" width="1.5" height="1.5"/><rect x="9.4" y="13.4" width="1.5" height="1.5"/><rect x="4.2" y="16.2" width="1.5" height="1.5"/><rect x="6.8" y="16.2" width="1.5" height="1.5"/><rect x="9.4" y="16.2" width="1.5" height="1.5"/><rect x="12.6" y="1" width="1" height="1"/><rect x="6.5" y="3.5" width="1.6" height=".8" opacity=".6"/><rect x="6.5" y="6" width="1.2" height=".8" opacity=".6"/><rect x="6.8" y="8.5" width="1" height=".8" opacity=".6"/></g></svg>
<svg style="left:1073px;top:744px;" width="13" height="8" viewBox="0 0 13 8"><path d="M1 7 L6.5 1.5 L12 7" stroke="#fff" stroke-width="1.4" fill="none"/></svg>
<svg style="left:1097px;top:739px;" width="13" height="17" viewBox="0 0 13 17"><rect x="1" y="4.5" width="7.5" height="8" rx="1.5" fill="none" stroke="#fff" stroke-width="1.2"/><path d="M8.5 7.5 L11.5 5.5 V11.5 L8.5 9.5" stroke="#fff" stroke-width="1.2" fill="none"/><path d="M3 1.5 Q6.5 0 10 1.5 M3 15.5 Q6.5 17 10 15.5" stroke="#fff" stroke-width="1.1" fill="none"/></svg>
<svg style="left:1118px;top:742px;" width="18" height="12" viewBox="0 0 18 12"><path d="M4.5 11 C1.5 11 0.5 8 2.5 6.5 C2.5 4 5.5 3 7 4.5 C8.5 1 13.5 1.5 14 5.5 C17.5 5.5 18 11 14.5 11 Z" fill="#f0f0f0"/></svg>
<svg style="left:1142px;top:741px;" width="18" height="14" viewBox="0 0 18 14"><rect x="5.5" y="3.5" width="10" height="7" fill="none" stroke="#fff" stroke-width="1.1"/><rect x="15.5" y="5.5" width="1.5" height="3" fill="#fff"/><path d="M8.5 5 L12.5 9 M12.5 5 L8.5 9" stroke="#fff" stroke-width="1.1"/><path d="M1.5 1 V4 M4 1 V4 M0.5 4 H5 V6.5 Q2.75 8.5 0.5 6.5 Z M2.75 8 V12" stroke="#fff" stroke-width="1" fill="none"/></svg>
<svg style="left:1169px;top:741px;" width="15" height="14" viewBox="0 0 15 14"><path d="M1.5 13 C1.5 6.5 6.5 1.5 13 1.5 M4.5 13 C4.5 8.3 8.3 4.5 13 4.5 M7.5 13 C7.5 10 10 7.5 13 7.5" stroke="#fff" stroke-width="1.3" fill="none"/><circle cx="12" cy="12" r="1.7" fill="#fff"/></svg>
<svg style="left:1190px;top:740px;" width="18" height="16" viewBox="0 0 18 16"><path d="M1 5.5 H4 L8 2 V14 L4 10.5 H1 Z" fill="none" stroke="#fff" stroke-width="1.1"/><path d="M10.5 5.5 Q12 8 10.5 10.5 M12.8 3.8 Q15.2 8 12.8 12.2 M15 2 Q18.4 8 15 14" stroke="#fff" stroke-width="1.1" fill="none"/></svg>
<svg style="left:1324px;top:739px;" width="26" height="26" viewBox="0 0 26 26"><path d="M1 1 H17 V12.5 H5 L1 16 Z" fill="#fff"/><path d="M3.5 4.5 H14.5 M3.5 7 H14.5 M3.5 9.5 H11" stroke="#1d2c40" stroke-width="1"/><circle cx="16.5" cy="16.5" r="7.6" fill="#2a2a2e" stroke="#555" stroke-width="1"/></svg>
<span style="left:104.0px;top:9.0px;font-size:13px;color:#fff;font-weight:bold;letter-spacing:-0.24px;">Schäfer</span>
<span style="left:104.2px;top:24.0px;font-size:10px;color:#fff;font-weight:bold;letter-spacing:-0.35px;">Topologie</span>
<span style="left:303.5px;top:14.0px;font-size:13px;color:#333;font-weight:bold;letter-spacing:-0.17px;">Schäfer</span>
<span style="left:7.5px;top:42.0px;font-size:12px;color:#222;letter-spacing:-0.20px;">Bearbeiten</span>
<span style="left:76.0px;top:42.0px;font-size:12px;color:#222;letter-spacing:-0.05px;">Arbeitsbereich</span>
<span style="left:164.0px;top:42.0px;font-size:12px;color:#222;letter-spacing:0.01px;">Inbetriebnahme</span>
<span style="left:260.0px;top:42.0px;font-size:12px;color:#222;letter-spacing:-0.21px;">Diagnose</span>
<span style="left:322.0px;top:42.0px;font-size:12px;color:#222;letter-spacing:-0.09px;">Apps</span>
<span style="left:39.0px;top:71.0px;font-size:12px;color:#222;letter-spacing:-0.36px;">Projekt schließen</span>
<span style="left:173.5px;top:71.0px;font-size:12px;color:#a6a6a6;letter-spacing:-0.39px;">Rückgängig</span>
<span style="left:277.5px;top:71.0px;font-size:12px;color:#a6a6a6;letter-spacing:-0.28px;">Wiederherstellen</span>
<span style="left:412.0px;top:71.0px;font-size:12px;color:#222;letter-spacing:-0.43px;">Reports</span>
<span style="left:500.0px;top:71.0px;font-size:12px;color:#222;letter-spacing:-0.27px;">Arbeitsbereich</span>
<span style="left:629.7px;top:71.0px;font-size:12px;color:#222;letter-spacing:-0.38px;">Kataloge</span>
<span style="left:722.0px;top:71.0px;font-size:12px;color:#222;letter-spacing:-0.34px;">Diagnose</span>
<span style="left:1140.5px;top:71.0px;font-size:12px;color:#222;letter-spacing:-0.18px;">Automatisch</span>
<span style="left:14.0px;top:102.0px;font-size:12px;color:#fff;font-weight:bold;letter-spacing:-0.17px;">Geräte</span>
<span style="left:36.5px;top:131.0px;font-size:12px;color:#a6a6a6;letter-spacing:-0.18px;">Hinzufügen</span>
<span style="left:160.5px;top:131.0px;font-size:12px;color:#a6a6a6;letter-spacing:-0.58px;">Löschen</span>
<span style="left:240.3px;top:131.0px;font-size:12px;color:#222;letter-spacing:-0.25px;">Programmieren</span>
<span style="left:377.2px;top:131.0px;font-size:12px;color:#a6a6a6;letter-spacing:-0.24px;">Hilfe</span>
<span style="left:443.3px;top:131.0px;font-size:12px;color:#222;letter-spacing:-0.14px;">Änderungen hervorheben</span>
<span style="left:594.0px;top:131.0px;font-size:12px;color:#222;letter-spacing:-0.27px;">Standardparameter</span>
<span style="left:30.3px;top:160.0px;font-size:12px;color:#222;letter-spacing:-0.23px;">Geräte</span>
<span style="left:42.7px;top:184.0px;font-size:12px;color:#222;letter-spacing:-0.31px;width:88.9px;overflow:hidden;height:15px;">Dynamische Ord.</span>
<span style="left:42.7px;top:208.0px;font-size:12px;color:#222;letter-spacing:-0.41px;width:88.9px;overflow:hidden;height:15px;">1.1.1 NR.1 DALI-...</span>
<span style="left:42.7px;top:232.0px;font-size:12px;color:#222;letter-spacing:-0.41px;width:88.9px;overflow:hidden;height:15px;">1.1.2 NR.2 DALI-...</span>
<span style="left:42.7px;top:256.0px;font-size:12px;color:#222;letter-spacing:-0.35px;width:88.9px;overflow:hidden;height:15px;">1.1.3 Schaltaktor.</span>
<span style="left:42.7px;top:280.0px;font-size:12px;color:#222;letter-spacing:-0.35px;width:88.9px;overflow:hidden;height:15px;">1.1.4 Schaltaktor.</span>
<span style="left:42.7px;top:304.0px;font-size:12px;color:#222;letter-spacing:-0.35px;width:88.9px;overflow:hidden;height:15px;">1.1.5 Schaltaktor.</span>
<span style="left:42.7px;top:328.0px;font-size:12px;color:#222;letter-spacing:-0.31px;width:88.9px;overflow:hidden;height:15px;">1.1.6 Jalousieakt..</span>
<span style="left:42.7px;top:352.0px;font-size:12px;color:#222;letter-spacing:-0.31px;width:88.9px;overflow:hidden;height:15px;">1.1.7 Heizungsak.</span>
<span style="left:42.7px;top:376.0px;font-size:12px;color:#222;letter-spacing:-0.41px;width:88.9px;overflow:hidden;height:15px;">1.1.8 thePixa P36</span>
<span style="left:42.7px;top:400.0px;font-size:12px;color:#222;letter-spacing:-0.41px;width:88.9px;overflow:hidden;height:15px;">1.1.17 thePixa P3</span>
<span style="left:42.7px;top:424.0px;font-size:12px;color:#222;letter-spacing:-0.19px;width:88.9px;overflow:hidden;height:15px;">1.1.19 Wetterstat</span>
<span style="left:42.7px;top:448.0px;font-size:12px;color:#222;letter-spacing:-0.44px;width:88.9px;overflow:hidden;height:15px;">1.1.20 Tastsensor.</span>
<span style="left:42.7px;top:472.0px;font-size:12px;color:#222;letter-spacing:-0.44px;width:88.9px;overflow:hidden;height:15px;">1.1.21 Türe Tasts.</span>
<span style="left:42.7px;top:496.0px;font-size:12px;color:#222;letter-spacing:-0.41px;width:88.9px;overflow:hidden;height:15px;">1.1.22 Aussenwa.</span>
<span style="left:42.7px;top:520.0px;font-size:12px;color:#222;letter-spacing:-0.49px;width:88.9px;overflow:hidden;height:15px;">1.1.23 Eingang T..</span>
<span style="left:42.7px;top:544.0px;font-size:12px;color:#222;letter-spacing:-0.45px;width:88.9px;overflow:hidden;height:15px;">1.1.24 Tastsensor.</span>
<span style="left:42.7px;top:568.0px;font-size:12px;color:#222;letter-spacing:-0.47px;width:88.9px;overflow:hidden;height:15px;">1.1.25 Türe Tasts.</span>
<span style="left:42.7px;top:592.0px;font-size:12px;color:#222;letter-spacing:-0.43px;width:88.9px;overflow:hidden;height:15px;">1.1.26 Aussenwa.</span>
<span style="left:42.7px;top:616.0px;font-size:12px;color:#222;letter-spacing:-0.45px;width:88.9px;overflow:hidden;height:15px;">1.1.27 Tastsensor.</span>
<span style="left:42.7px;top:640.0px;font-size:12px;color:#222;letter-spacing:-0.47px;width:88.9px;overflow:hidden;height:15px;">1.1.28 Türe Tasts.</span>
<span style="left:42.7px;top:664.0px;font-size:12px;color:#222;letter-spacing:-0.24px;width:88.9px;overflow:hidden;height:15px;">1.1.29 Bett links...</span>
<span style="left:42.7px;top:688.0px;font-size:12px;color:#222;letter-spacing:-0.31px;width:88.9px;overflow:hidden;height:15px;">1.1.30 Bett recht..</span>
<span style="left:158.2px;top:166.0px;font-size:14px;color:#1a1a1a;-webkit-text-stroke:0.45px #1a1a1a;letter-spacing:-0.10px;">1.1.85 KNX-LUNOS-CONTROL4-IW &gt; Konfiguration</span>
<span style="left:183.5px;top:207.0px;font-size:12px;color:#1a6fb5;font-weight:bold;letter-spacing:-0.34px;">Konfiguration</span>
<span style="left:183.5px;top:246.0px;font-size:12px;color:#222;letter-spacing:-0.41px;">HLK-Einstellungen</span>
<span style="left:183.5px;top:285.0px;font-size:12px;color:#222;letter-spacing:-0.20px;">Lüfter</span>
<span style="left:183.5px;top:324.0px;font-size:12px;color:#222;letter-spacing:-0.75px;">System</span>
<span style="left:378.0px;top:209.0px;font-size:12px;color:#222;letter-spacing:-0.13px;">Konfiguration</span>
<span style="left:378.0px;top:240.0px;font-size:12px;color:#222;letter-spacing:-0.10px;">Lüftertyp</span>
<span style="left:378.0px;top:272.0px;font-size:12px;color:#222;letter-spacing:-0.28px;">Betriebseinstellung</span>
<span style="left:378.4px;top:305.0px;font-size:12px;color:#222;letter-spacing:-0.30px;">DPT  Lüftersteuerung</span>
<span style="left:624.0px;top:209.0px;font-size:12px;color:#444;letter-spacing:-0.24px;">Experte/Master</span>
<span style="left:624.0px;top:240.0px;font-size:12px;color:#444;letter-spacing:-0.54px;">E² 60</span>
<span style="left:624.4px;top:530.0px;font-size:12px;color:#444;letter-spacing:-0.27px;">Inaktiv</span>
<span style="left:640.5px;top:272.0px;font-size:12px;color:#222;letter-spacing:-0.28px;">Betriebsart HLK</span>
<span style="left:752.0px;top:272.0px;font-size:12px;color:#222;letter-spacing:-0.08px;">Betriebsart Lüfter</span>
<span style="left:640.5px;top:305.0px;font-size:12px;color:#222;letter-spacing:-0.16px;">Lüfterskala [0-100 %]</span>
<span style="left:782.4px;top:305.0px;font-size:12px;color:#222;letter-spacing:-0.03px;">Lüfterstufe [0-3]</span>
<span style="left:378.2px;top:357.0px;font-size:12px;color:#555;letter-spacing:-0.25px;">Führungs-Funktionen</span>
<span style="left:388.3px;top:385.0px;font-size:12px;color:#222;letter-spacing:-0.24px;">Temperatur</span>
<span style="left:640.2px;top:385.0px;font-size:12px;color:#222;letter-spacing:-0.10px;">Inaktiv</span>
<span style="left:706.0px;top:385.0px;font-size:12px;color:#222;letter-spacing:0.20px;">Aktiv</span>
<span style="left:388.3px;top:418.0px;font-size:12px;color:#222;letter-spacing:-0.26px;">Feuchtigkeit</span>
<span style="left:640.2px;top:418.0px;font-size:12px;color:#222;letter-spacing:-0.10px;">Inaktiv</span>
<span style="left:706.0px;top:418.0px;font-size:12px;color:#222;letter-spacing:0.20px;">Aktiv</span>
<span style="left:388.3px;top:451.0px;font-size:12px;color:#222;letter-spacing:-0.93px;">CO2</span>
<span style="left:640.2px;top:451.0px;font-size:12px;color:#222;letter-spacing:-0.10px;">Inaktiv</span>
<span style="left:706.0px;top:451.0px;font-size:12px;color:#222;letter-spacing:0.20px;">Aktiv</span>
<span style="left:378.2px;top:503.0px;font-size:12px;color:#555;letter-spacing:-0.27px;">Potenzialfreie Kontakte</span>
<span style="left:388.3px;top:530.0px;font-size:12px;color:#222;letter-spacing:-0.42px;">Auswahl</span>
<span style="left:159.3px;top:685.0px;font-size:12px;color:#222;letter-spacing:-0.35px;">Assoziationen</span>
<span style="left:264.3px;top:685.0px;font-size:12px;color:#222;letter-spacing:-0.48px;">Parameter</span>
<span style="left:1128.4px;top:104.0px;font-size:14px;color:#333;letter-spacing:-0.27px;">Eigenschaften</span>
<span style="left:1128.0px;top:560.0px;font-size:14px;color:#555;letter-spacing:-0.32px;">Suchen und Ersetzen</span>
<span style="left:1128.0px;top:590.0px;font-size:14px;color:#555;letter-spacing:-0.07px;">Arbeitsbereiche</span>
<span style="left:1128.0px;top:620.0px;font-size:14px;color:#555;letter-spacing:0.05px;">Offene Aufgaben</span>
<span style="left:1128.0px;top:650.0px;font-size:14px;color:#555;letter-spacing:-0.07px;">Laufende Operationen</span>
<span style="left:1128.0px;top:680.0px;font-size:14px;color:#555;letter-spacing:0.03px;">Undo Historie</span>
<span style="left:5.7px;top:712.0px;font-size:10px;color:#222;letter-spacing:-0.46px;">1.1 Neue Linie</span>
<span style="left:444.0px;top:712.0px;font-size:10px;color:#222;letter-spacing:-0.15px;">6: IO, Lüfterstufe - Lüftersteuerung</span>
<span style="left:88.4px;top:741.0px;font-size:15px;color:#333;letter-spacing:-0.19px;">Zur Suche Text hier eingeben</span>
<span style="left:1218.3px;top:742.0px;font-size:12px;color:#fff;letter-spacing:-1.20px;">DEU</span>
<span style="left:1267.0px;top:733.0px;font-size:12px;color:#fff;letter-spacing:-0.77px;">12:11</span>
<span style="left:1253.5px;top:751.0px;font-size:12px;color:#fff;letter-spacing:-0.60px;">14.11.2022</span>
<span style="left:1337.6px;top:751.0px;font-size:11px;color:#fff;font-weight:bold;">3</span>
</div>
</body>
</html>
